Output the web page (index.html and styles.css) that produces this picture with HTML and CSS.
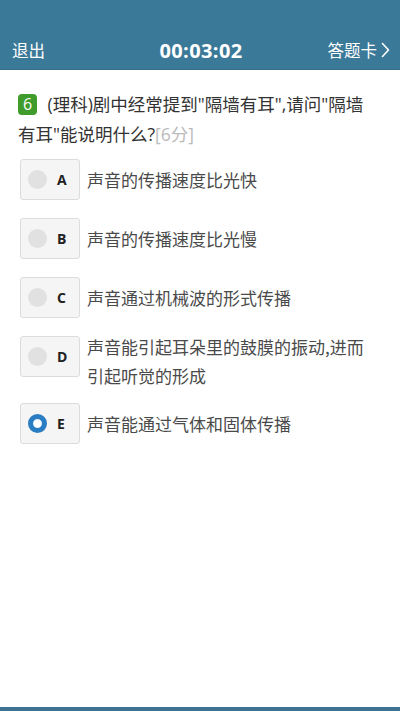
FILE: index.html
```html
<!DOCTYPE html>
<html lang="zh-CN">
<head>
<meta charset="utf-8">
<meta name="viewport" content="width=device-width, initial-scale=1">
<title>答题</title>
<link rel="stylesheet" href="styles.css">
</head>
<body>
<div class="page">
  <header class="topbar">
    <div class="topbar-row">
      <span class="exit">退出</span>
      <span class="timer">00:03:02</span>
      <span class="card">答题卡<svg class="chev" width="9" height="16" viewBox="0 0 9 16"><polyline points="1.5,1.5 7.5,8 1.5,14.5" fill="none" stroke="#fff" stroke-width="1.6" stroke-linejoin="round" stroke-linecap="round"/></svg></span>
    </div>
  </header>
  <main class="content">
    <p class="question"><span class="qnum">6</span> (理科)剧中经常提到"隔墙有耳",请问"隔墙有耳"能说明什么?<span class="score">[6分]</span></p>
    <ul class="options">
      <li class="opt"><span class="opt-box"><span class="radio"></span><span class="letter">A</span></span><span class="opt-text">声音的传播速度比光快</span></li>
      <li class="opt"><span class="opt-box"><span class="radio"></span><span class="letter">B</span></span><span class="opt-text">声音的传播速度比光慢</span></li>
      <li class="opt"><span class="opt-box"><span class="radio"></span><span class="letter">C</span></span><span class="opt-text">声音通过机械波的形式传播</span></li>
      <li class="opt opt--multi"><span class="opt-box"><span class="radio"></span><span class="letter">D</span></span><span class="opt-text">声音能引起耳朵里的鼓膜的振动,进而引起听觉的形成</span></li>
      <li class="opt"><span class="opt-box"><span class="radio radio--on"></span><span class="letter">E</span></span><span class="opt-text">声音能通过气体和固体传播</span></li>
    </ul>
  </main>
  <footer class="bottombar"></footer>
</div>
</body>
</html>
```
FILE: styles.css
```css
* { box-sizing: border-box; }
html, body { margin: 0; padding: 0; }
body {
  background: #fff;
  font-family: "Open Sans", "Noto Sans CJK SC", sans-serif;
  color: #333;
}
.page {
  height: 100vh;
  display: flex;
  flex-direction: column;
}
.topbar {
  background: #3b7999;
  height: 70px;
  padding-top: 30px;
  border-bottom: 1px solid #356e8c;
}
.topbar-row {
  height: 40px;
  display: flex;
  align-items: center;
  justify-content: space-between;
  padding: 0 10px 0 12px;
  color: #fff;
}
.exit, .card {
  font-family: "Noto Sans CJK SC", sans-serif;
  font-size: 16.5px;
  width: 80px;
}
.card {
  display: flex;
  align-items: center;
  justify-content: flex-end;
  gap: 4px;
}
.chev { display: block; }
.timer {
  font-family: "Open Sans", sans-serif;
  font-weight: 700;
  font-size: 20px;
  letter-spacing: 0.4px;
}
.content {
  flex: 1;
  padding: 19px 33px 0 18px;
}
.question {
  margin: 0;
  font-size: 17.5px;
  line-height: 30px;
  color: #333;
}
.qnum {
  display: inline-block;
  width: 19px;
  height: 21px;
  line-height: 21px;
  margin-right: 6px;
  text-align: center;
  background: #3f9c2c;
  color: #fff;
  border-radius: 4px;
  font-size: 16px;
  vertical-align: 1px;
}
.score { color: #bbb; }
.options {
  list-style: none;
  margin: 10px 0 0 2px;
  padding: 0;
}
.opt {
  display: flex;
  align-items: center;
  gap: 7px;
  margin-bottom: 18px;
}
.opt--multi { align-items: flex-start; }
.opt-box {
  flex: none;
  width: 60px;
  height: 41px;
  background: #f5f5f5;
  border: 1px solid #dcdcdc;
  border-radius: 3px;
  display: flex;
  align-items: center;
  padding-left: 7px;
  gap: 10px;
}
.radio {
  width: 19px;
  height: 19px;
  border-radius: 50%;
  background: #e1e1e1;
}
.radio--on {
  background: #fff;
  border: 5px solid #2a7cc3;
  box-shadow: inset 0 0 0 1px #e8f1fa;
}
.letter {
  font-family: "Open Sans", sans-serif;
  font-weight: 700;
  font-size: 14px;
  color: #222;
}
.opt-text {
  font-family: "Noto Sans CJK SC", sans-serif;
  font-size: 17px;
  line-height: 29px;
  color: #4a4a4a;
}
.opt--multi .opt-text { margin: -4px 0 -5px; }
.bottombar {
  height: 4px;
  background: #3d7493;
}
```
